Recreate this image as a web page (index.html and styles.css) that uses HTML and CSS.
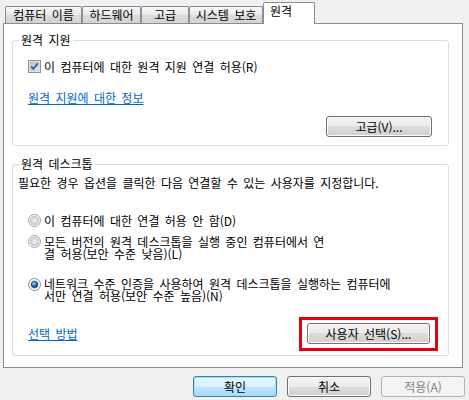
FILE: index.html
```html
<!DOCTYPE html>
<html lang="ko">
<head>
  <meta charset="UTF-8">
  <title>시스템 속성 - 원격</title>
  <link rel="stylesheet" href="styles.css">
</head>
<body>
  <div class="dialog">
    <!-- 탭 -->
    <div class="tabs">
      <div class="tab tab-name">컴퓨터 이름</div>
      <div class="tab tab-hw">하드웨어</div>
      <div class="tab tab-adv">고급</div>
      <div class="tab tab-sys">시스템 보호</div>
      <div class="tab tab-remote active">원격</div>
    </div>

    <div class="panel">
      <!-- 원격 지원 -->
      <fieldset class="group">
        <legend>원격 지원</legend>
        <div class="group-body assist">
          <label class="option">
            <svg class="box" width="13" height="13" viewBox="0 0 13 13">
              <defs>
                <linearGradient id="chk" x1="0" y1="0" x2="1" y2="1">
                  <stop offset="0" stop-color="#b9bec6"/>
                  <stop offset="1" stop-color="#eef0f3"/>
                </linearGradient>
              </defs>
              <rect x="0.5" y="0.5" width="12" height="12" fill="#fff" stroke="#8e8f8f"/>
              <rect x="2" y="2" width="9" height="9" fill="url(#chk)" stroke="#9ea3ab" stroke-width="0.6"/>
              <path d="M3.2 6.4 L5.4 8.8 L9.8 3.4" fill="none" stroke="#3b57a8" stroke-width="1.8"/>
            </svg>
            <span>이 컴퓨터에 대한 원격 지원 연결 허용(R)</span>
          </label>
          <a class="link link-info" href="#">원격 지원에 대한 정보</a>
          <div class="row-end">
            <button class="btn btn-adv">고급(V)...</button>
          </div>
        </div>
      </fieldset>

      <!-- 원격 데스크톱 -->
      <fieldset class="group group-rdp">
        <legend>원격 데스크톱</legend>
        <div class="group-body rdp">
          <p class="intro">필요한 경우 옵션을 클릭한 다음 연결할 수 있는 사용자를 지정합니다.</p>

          <label class="option radio-1">
            <svg class="radio" width="13" height="13" viewBox="0 0 13 13">
              <defs>
                <radialGradient id="rad" cx="0.5" cy="0.5" r="0.5">
                  <stop offset="0" stop-color="#f4f4f4"/>
                  <stop offset="1" stop-color="#c9c9c9"/>
                </radialGradient>
              </defs>
              <circle cx="6.5" cy="6.5" r="6" fill="#fff" stroke="#a3a3a3"/>
              <circle cx="6.5" cy="6.5" r="4.3" fill="url(#rad)" stroke="#b4b4b4" stroke-width="0.6"/>
            </svg>
            <span>이 컴퓨터에 대한 연결 허용 안 함(D)</span>
          </label>

          <label class="option radio-2">
            <svg class="radio" width="13" height="13" viewBox="0 0 13 13">
              <circle cx="6.5" cy="6.5" r="6" fill="#fff" stroke="#a3a3a3"/>
              <circle cx="6.5" cy="6.5" r="4.3" fill="url(#rad)" stroke="#b4b4b4" stroke-width="0.6"/>
            </svg>
            <span>모든 버전의 원격 데스크톱을 실행 중인 컴퓨터에서 연<br>결 허용(보안 수준 낮음)(L)</span>
          </label>

          <label class="option radio-3">
            <svg class="radio" width="13" height="13" viewBox="0 0 13 13">
              <defs>
                <radialGradient id="dot" cx="0.4" cy="0.35" r="0.6">
                  <stop offset="0" stop-color="#8fd8ff"/>
                  <stop offset="0.5" stop-color="#2a8ad4"/>
                  <stop offset="1" stop-color="#0d3f7a"/>
                </radialGradient>
              </defs>
              <circle cx="6.5" cy="6.5" r="6" fill="#fff" stroke="#8a8a8a"/>
              <circle cx="6.5" cy="6.5" r="4.3" fill="#d6d6d6"/>
              <circle cx="6.5" cy="6.5" r="3.3" fill="url(#dot)" stroke="#1b3f6f" stroke-width="0.6"/>
            </svg>
            <span>네트워크 수준 인증을 사용하여 원격 데스크톱을 실행하는 컴퓨터에<br>서만 연결 허용(보안 수준 높음)(N)</span>
          </label>

          <div class="row-between">
            <a class="link" href="#">선택 방법</a>
            <span class="highlight">
              <button class="btn btn-users">사용자 선택(S)...</button>
            </span>
          </div>
        </div>
      </fieldset>
    </div>

    <!-- 하단 버튼 -->
    <div class="dialog-buttons">
      <button class="btn btn-default">확인</button>
      <button class="btn">취소</button>
      <button class="btn" disabled>적용(A)</button>
    </div>
  </div>
</body>
</html>
```

FILE: styles.css
```css
body { /* 전체 */
  margin: 0;
  background-color: #f0f0f0;
  font-family: "Noto Sans CJK KR", "Liberation Sans", sans-serif;
  font-size: 12px;
  line-height: 12px;
  word-spacing: 2px;
  color: #000;
}
.dialog {
  padding: 3px 0 0 3px;
  width: 466px;
}

/* 탭 */
.tabs {
  display: flex;
  align-items: flex-end;
  height: 20px;
  padding-left: 2px;
  position: relative;
  z-index: 1;
}
.tab {
  box-sizing: border-box;
  height: 17px;
  padding-top: 2px;
  border: 1px solid #898c95;
  border-bottom: none;
  border-radius: 2px 2px 0 0;
  background: linear-gradient(#f6f6f6, #e9e9e9 50%, #dcdcdc 50%, #d3d3d3);
  text-align: center;
  white-space: nowrap;
}
.tab-name { width: 77px; }
.tab-hw { width: 59px; }
.tab-adv { width: 48px; }
.tab-sys { width: 74px; }
.tab.active { /* 선택된 탭 */
  width: 52px;
  height: 22px;
  margin-bottom: -1px;
  padding-left: 6px;
  background: #fff;
  text-align: left;
}

/* 탭 내용 */
.panel {
  box-sizing: border-box;
  width: 460px;
  border: 1px solid #898c95;
  background: #fff;
  padding: 10px 13px 11px 8px;
}
.group { /* 그룹 상자 */
  margin: 0;
  padding: 0;
  min-width: 0;
  border: 1px solid #d5dfe5;
  border-radius: 3px;
}
.group legend {
  margin-left: 6px;
  padding: 0 2px;
  line-height: 12px;
}
.group-rdp {
  margin-top: 12px;
}
.group-body.assist {
  padding: 14px 16px 8px 15px;
}
.group-body.rdp {
  padding: 7px 10px 4px 5px;
}

.option { /* 체크박스, 라디오 */
  display: flex;
  align-items: flex-start;
  gap: 3px;
}
.option svg {
  flex: none;
}
.option span {
  padding-top: 0.5px;
}
.rdp .option {
  margin-left: 10px;
}
.radio-1 { margin-top: 25px; }
.radio-2 { margin-top: 8px; }
.radio-3 { margin-top: 18px; }
.radio-2 .radio, .radio-3 .radio {
  margin-top: 0;
}

.intro {
  margin: 0;
}

.link {
  color: #0066cc;
  text-decoration: underline;
}
.link-info {
  display: inline-block;
  margin-top: 19px;
}

.row-end {
  display: flex;
  justify-content: flex-end;
  margin-top: 12px;
}
.row-between {
  display: flex;
  justify-content: space-between;
  align-items: center;
  margin-top: 15px;
  padding-left: 10px;
}

/* 버튼 */
.btn {
  box-sizing: border-box;
  height: 21px;
  padding: 0;
  font-family: inherit;
  font-size: 12px;
  word-spacing: 2px;
  color: #000;
  border: 1px solid #707070;
  border-radius: 3px;
  background: linear-gradient(#f2f2f2, #ebebeb 50%, #dddddd 50%, #cfcfcf);
  box-shadow: inset 0 0 0 1px #fcfcfc;
}
.btn-adv { width: 106px; }
.btn-users { width: 123px; display: block; }
.highlight { /* 빨간 강조 표시 */
  display: block;
  border: 3px solid #e8000b;
  padding: 3px 5px 4px 5px;
}

.dialog-buttons {
  display: flex;
  justify-content: flex-end;
  gap: 10px;
  margin-top: 8px;
  padding-right: 4px;
}
.dialog-buttons .btn {
  width: 84px;
}
.btn-default { /* 확인 (기본 버튼) */
  border-color: #3c7fb1;
  background: linear-gradient(#eaf6fd, #d9f0fc 50%, #bee6fd 50%, #a7d9f5);
  box-shadow: inset 0 0 0 1px #9ee2f6;
}
.btn:disabled {
  color: #838383;
  border-color: #adb2b5;
  background: #f4f4f4;
  box-shadow: none;
}
```
